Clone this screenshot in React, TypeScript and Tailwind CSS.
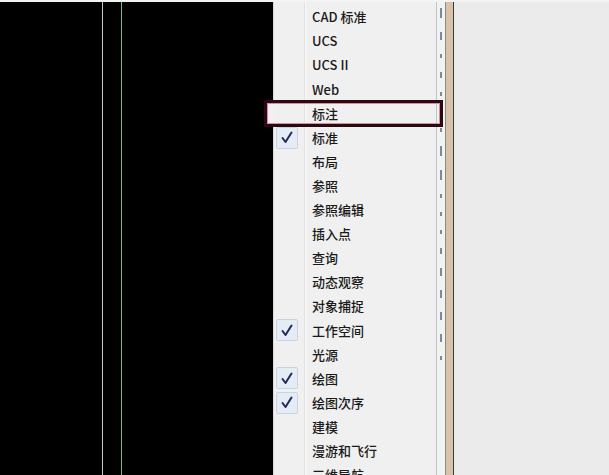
import React from "react";

const items: { label: string; checked?: boolean }[] = [
  { label: "CAD 标准" },
  { label: "UCS" },
  { label: "UCS II" },
  { label: "Web" },
  { label: "标注" },
  { label: "标准", checked: true },
  { label: "布局" },
  { label: "参照" },
  { label: "参照编辑" },
  { label: "插入点" },
  { label: "查询" },
  { label: "动态观察" },
  { label: "对象捕捉" },
  { label: "工作空间", checked: true },
  { label: "光源" },
  { label: "绘图", checked: true },
  { label: "绘图次序", checked: true },
  { label: "建模" },
  { label: "漫游和飞行" },
  { label: "三维导航" },
];

function Check() {
  return (
    <div className="w-[22px] h-[22px] bg-[#e6ecf6] border border-[#c9d3e6] rounded-[2px] flex items-center justify-center">
      <svg width="12" height="13" viewBox="0 0 12 13">
        <path d="M1.5 7 L4.5 11 L10.5 1.5" stroke="#1f2a5c" strokeWidth="2" fill="none" strokeLinecap="round" strokeLinejoin="round" />
      </svg>
    </div>
  );
}

export default function App() {
  return (
    <div
      className="relative w-[609px] h-[475px] overflow-hidden bg-[#ececec]"
      style={{ fontFamily: '"Noto Sans CJK SC", "Noto Sans", sans-serif' }}
    >
      <div className="h-[2px] bg-[#f4f4f4]" />
      <div className="flex h-[473px]">
        {/* canvas */}
        <div className="w-[273px] h-full bg-black flex">
          <div className="w-[102px]" />
          <div className="w-[1px] bg-[#c8c8c8]" />
          <div className="w-[18px]" />
          <div className="w-[1px] bg-[#6fb8a8]" />
        </div>
        {/* menu */}
        <div className="relative w-[164px] h-full bg-[#f0f0f0] border-l border-[#d8d8d8] flex overflow-hidden">
          <div className="w-[30px] h-full flex flex-col pt-[3px]">
            {items.map((it, i) => (
              <div key={i} className="h-[24.1px] shrink-0 flex items-center pl-[2px]">
                {it.checked ? <Check /> : null}
              </div>
            ))}
          </div>
          <div className="w-[1px] h-full bg-[#e0e0e0]" />
          <div className="w-[1px] h-full bg-[#fafafa]" />
          <div className="flex-1 flex flex-col pt-[3px] pl-[6px]">
            {items.map((it, i) => (
              <div key={i} className="h-[24.1px] shrink-0 flex items-center text-[13px] font-medium text-[#1a1a1a] whitespace-nowrap">
                {it.label}
              </div>
            ))}
          </div>
          <div className="w-[1px] h-full bg-[#b8c4d0]" />
        </div>
        {/* toolbar strip */}
        <div className="w-[8px] h-full bg-[#f2f2f0] flex flex-col items-center gap-[14px] pt-[6px]">
          {[10, 8, 4, 6, 4, 4, 4, 10, 10, 4, 4, 4, 6, 8, 8, 8, 8, 4].map((h, i) => (
            <div key={i} className="w-[2px] bg-[#7a8a9a]" style={{ height: h }} />
          ))}
        </div>
        <div className="w-[1px] h-full bg-[#8a8a8a]" />
        <div className="w-[7px] h-full bg-[#d8c2aa]" />
        <div className="w-[1px] h-full bg-[#3a3a3a]" />
        <div className="flex-1 h-full bg-[#ebebeb]" />
      </div>
      {/* highlight annotation */}
      <div className="absolute left-[264px] top-[100px] w-[179px] h-[27px] border-[3px] border-[#2a0a10]">
        <div className="relative w-full h-full border border-[#d88ca0]">
          <div className="absolute left-0 top-0 w-[7px] h-full bg-[#f6eef2]" />
        </div>
      </div>
    </div>
  );
}
